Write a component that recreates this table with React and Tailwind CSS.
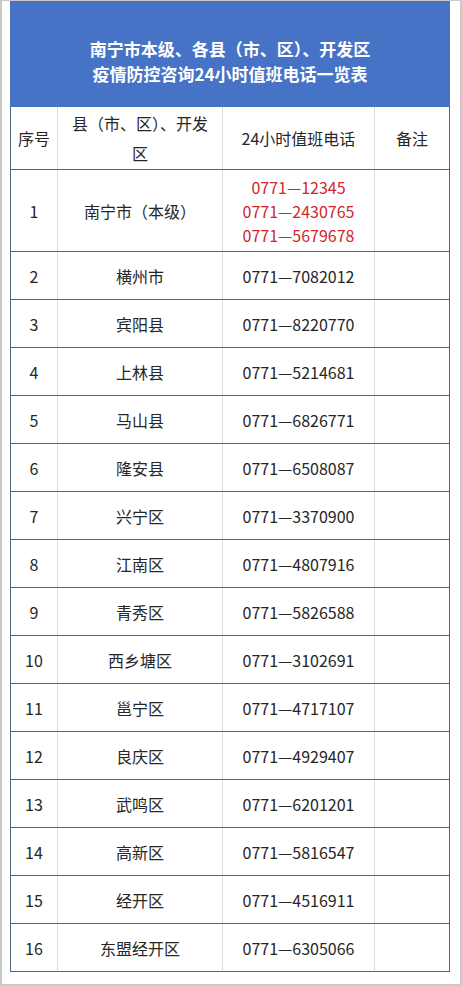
import React from 'react';

const rows = [
  ['2', '横州市', '0771—7082012'],
  ['3', '宾阳县', '0771—8220770'],
  ['4', '上林县', '0771—5214681'],
  ['5', '马山县', '0771—6826771'],
  ['6', '隆安县', '0771—6508087'],
  ['7', '兴宁区', '0771—3370900'],
  ['8', '江南区', '0771—4807916'],
  ['9', '青秀区', '0771—5826588'],
  ['10', '西乡塘区', '0771—3102691'],
  ['11', '邕宁区', '0771—4717107'],
  ['12', '良庆区', '0771—4929407'],
  ['13', '武鸣区', '0771—6201201'],
  ['14', '高新区', '0771—5816547'],
  ['15', '经开区', '0771—4516911'],
  ['16', '东盟经开区', '0771—6305066'],
];

function Row({ no, name, phone, note = '', className = 'h-[48px]' }) {
  return (
    <div className={`flex border-b border-[#4f6680] ${className}`}>
      <div className="w-[46px] shrink-0 flex items-center justify-center">{no}</div>
      <div className="w-[165px] shrink-0 flex items-center justify-center border-l border-[#d6dbe1] px-2 text-center">{name}</div>
      <div className="w-[152px] shrink-0 flex items-center justify-center border-l border-[#d6dbe1] text-center">{phone}</div>
      <div className="flex-1 flex items-center justify-center border-l border-[#d6dbe1]">{note}</div>
    </div>
  );
}

export default function App() {
  return (
    <div
      className="w-[462px] h-[986px] bg-white border-2 border-t border-[#c9c9c9] pl-[8px] text-[16px] text-[#262626]"
      style={{ fontFamily: '"Noto Sans CJK SC", "Noto Sans", sans-serif' }}
    >
      <div className="w-[440px] border-l border-r border-[#4f6680]">
        <div className="h-[106px] bg-[#4673c6] -mx-px pt-[35px] text-center text-white font-bold text-[17px] leading-[25px]">
          <div>南宁市本级、各县（市、区）、开发区</div>
          <div>疫情防控咨询24小时值班电话一览表</div>
        </div>
        <Row
          no="序号"
          name={<span className="leading-[30px]">县（市、区）、开发区</span>}
          phone="24小时值班电话"
          note="备注"
          className="h-[63px]"
        />
        <div className="flex border-b border-[#4f6680] h-[82px]">
          <div className="w-[46px] shrink-0 flex items-center justify-center">1</div>
          <div className="w-[165px] shrink-0 flex items-center justify-center border-l border-[#d6dbe1]">南宁市（本级）</div>
          <div className="w-[152px] shrink-0 flex flex-col items-center justify-center border-l border-[#d6dbe1] text-[#d0262c] leading-[24px]">
            <div>0771—12345</div>
            <div>0771—2430765</div>
            <div>0771—5679678</div>
          </div>
          <div className="flex-1 flex items-center justify-center border-l border-[#d6dbe1]"></div>
        </div>
        {rows.map(([no, name, phone]) => (
          <Row key={no} no={no} name={name} phone={phone} />
        ))}
      </div>
    </div>
  );
}
